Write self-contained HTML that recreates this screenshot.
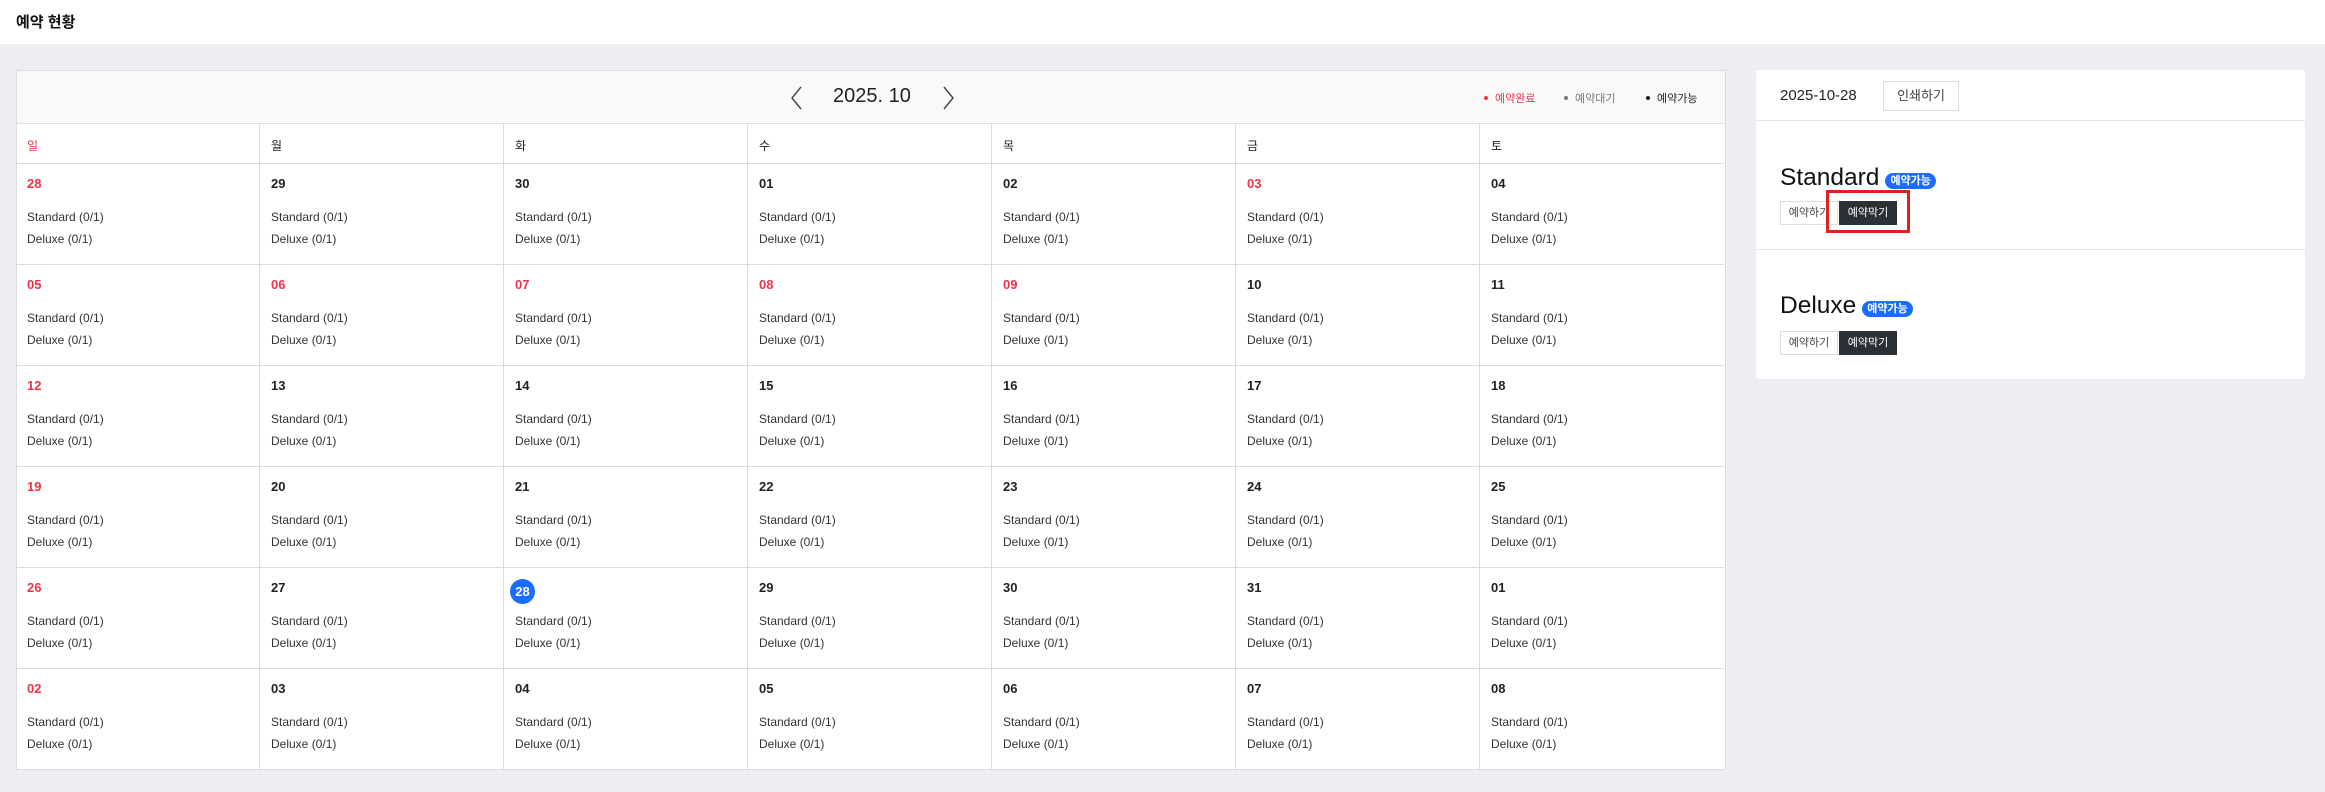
<!DOCTYPE html>
<html><head><meta charset="utf-8"><style>
*{margin:0;padding:0;box-sizing:border-box}
body{width:2325px;height:792px;background:#eceef2;font-family:"Liberation Sans","Noto Sans CJK KR",sans-serif;color:#222;position:relative;overflow:hidden}
.hdr{position:absolute;left:0;top:0;width:2325px;height:44px;background:#fff}
.hdr span{position:absolute;left:16px;top:11px;font-size:15px;font-weight:bold;color:#111}
.cal{position:absolute;left:16px;top:70px;width:1710px;height:700px;background:#fff;border:1px solid #dcdcdc}
.mh{position:absolute;left:0;top:0;width:100%;height:53px;background:#f9f9f9;border-bottom:1px solid #dcdcdc}
.title{position:absolute;left:816px;top:14px;font-size:20px;color:#222}
.arr{position:absolute;top:14px}
.lg{position:absolute;top:19px;font-size:11px}
.lg i{display:inline-block;width:4px;height:4px;border-radius:50%;margin-right:7px;vertical-align:middle;position:relative;top:-1px}
.cell{position:absolute;width:244px;border-right:1px solid #dcdcdc;border-bottom:1px solid #dcdcdc}
.dn{height:40px;font-size:12px;padding:13px 0 0 11px}
.d{height:101px}
.d b{position:absolute;left:11px;top:12px;font-size:13px;font-weight:bold;color:#222}
.d .s{position:absolute;left:11px;top:46px;font-size:12px;color:#333}
.d .x{position:absolute;left:11px;top:68px;font-size:12px;color:#333}
.r{color:#f0334a!important}
.today{position:absolute;left:6px;top:11px;width:25px;height:25px;border-radius:50%;background:#1a6dff;color:#fff;font-weight:bold;font-size:13px;text-align:center;line-height:25px}
.panel{position:absolute;left:1756px;top:70px;width:549px;height:309px;background:#fff;border-radius:3px;box-shadow:0 0 2px rgba(0,0,0,.06)}
.btn{position:absolute;height:24px;font-size:11px;line-height:22px;text-align:center;border:1px solid #ddd;color:#444;background:#fff}
.dk{background:#2b2f36;color:#fff;border-color:#2b2f36}
.hd{position:absolute;left:24px;display:flex;align-items:center;font-size:24.5px;color:#111;white-space:nowrap}
.badge{display:inline-block;height:16px;padding:0 5px;margin-left:6px;margin-top:6px;background:#1a6dff;color:#fff;border-radius:8px;font-size:11px;font-weight:bold;line-height:16px;text-align:center}
</style></head><body>
<div class="hdr"><span>예약 현황</span></div>
<div class="cal">
<div class="mh">
<svg class="arr" style="left:772px" width="14" height="26"><path d="M12 2 L3 13 L12 24" fill="none" stroke="#444" stroke-width="1.4"/></svg>
<div class="title">2025. 10</div>
<svg class="arr" style="left:925px" width="14" height="26"><path d="M2 2 L11 13 L2 24" fill="none" stroke="#444" stroke-width="1.4"/></svg>
<div class="lg" style="left:1467px;color:#f0334a"><i style="background:#f0334a"></i>예약완료</div>
<div class="lg" style="left:1547px;color:#777"><i style="background:#777"></i>예약대기</div>
<div class="lg" style="left:1629px;color:#222"><i style="background:#222"></i>예약가능</div>
</div>
<div id="g"></div>
</div>
<div class="panel">
<div style="position:absolute;left:24px;top:17px;font-size:15px;color:#222">2025-10-28</div>
<div class="btn" style="left:127px;top:11px;width:76px;height:30px;line-height:28px;font-size:13px">인쇄하기</div>
<div style="position:absolute;left:0;top:50px;width:100%;border-top:1px solid #e5e5e5"></div>
<div class="hd" style="top:94px">Standard<span class="badge">예약가능</span></div>
<div class="btn" style="left:24px;top:131px;width:58px">예약하기</div>
<div class="btn dk" style="left:83px;top:131px;width:58px">예약막기</div>
<div style="position:absolute;left:70px;top:120px;width:84px;height:43px;border:3px solid #e02020"></div>
<div style="position:absolute;left:0;top:179px;width:100%;border-top:1px solid #e5e5e5"></div>
<div class="hd" style="top:222px">Deluxe<span class="badge">예약가능</span></div>
<div class="btn" style="left:24px;top:261px;width:58px">예약하기</div>
<div class="btn dk" style="left:83px;top:261px;width:58px">예약막기</div>
</div>
<script>
var g=document.getElementById('g'),h='';
var names=['일','월','화','수','목','금','토'];
for(var i=0;i<7;i++)h+='<div class="cell dn'+(i==0?' r':'')+'" style="left:'+(i*244-1)+'px;top:53px;'+(i==6?'border-right:none;':'')+'">'+names[i]+'</div>';
var days=['28','29','30','01','02','03','04','05','06','07','08','09','10','11','12','13','14','15','16','17','18','19','20','21','22','23','24','25','26','27','28','29','30','31','01','02','03','04','05','06','07','08'];
var red={0:1,5:1,7:1,8:1,9:1,10:1,11:1};
for(var k=0;k<42;k++){var c=k%7,r=Math.floor(k/7);
var rc=(c==0||red[k])?' class="r"':'';
var num=(k==30)?'<div class="today">28</div>':'<b'+rc+'>'+days[k]+'</b>';
h+='<div class="cell d" style="left:'+(c*244-1)+'px;top:'+(93+r*101)+'px;'+(c==6?'border-right:none;':'')+(r==5?'border-bottom:none;':'')+'">'+num+'<div class="s">Standard (0/1)</div><div class="x">Deluxe (0/1)</div></div>';}
g.innerHTML=h;
</script>
</body></html>
